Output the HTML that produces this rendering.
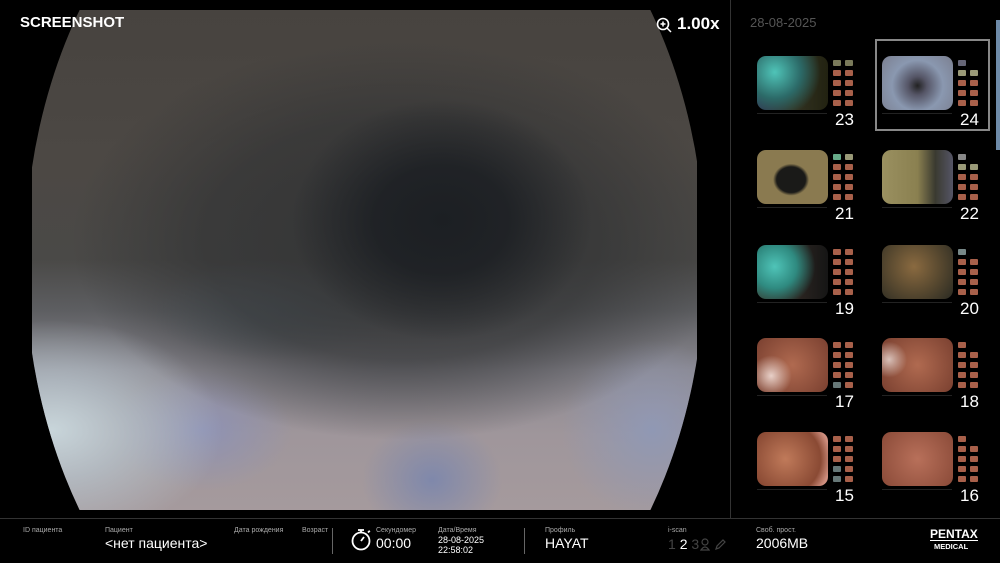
<!DOCTYPE html>
<html><head><meta charset="utf-8"><style>
*{margin:0;padding:0;box-sizing:border-box}
html,body{width:1000px;height:563px;overflow:hidden}
body{background:#000;position:relative;font-family:"Liberation Sans","DejaVu Sans",sans-serif;color:#fff}
.abs{position:absolute}
#clip{left:32px;top:10px;width:665px;height:500px;clip-path:ellipse(340px 460px at 333px 250px);
background:
radial-gradient(ellipse 150px 120px at 410px 210px,#1c1f23 0%,rgba(28,31,35,.85) 45%,rgba(28,31,35,0) 100%),
radial-gradient(ellipse 330px 200px at 370px 230px,#333435 0%,rgba(51,52,53,.7) 60%,rgba(51,52,53,0) 100%),
radial-gradient(ellipse 170px 110px at 20px 420px,#c8d5da 0%,rgba(185,198,206,.7) 45%,rgba(185,198,206,0) 100%),
radial-gradient(ellipse 70px 60px at 400px 470px,#7f88ab 0%,rgba(127,136,171,0) 100%),
radial-gradient(ellipse 90px 60px at 170px 420px,#8e92b4 0%,rgba(142,146,180,0) 100%),
radial-gradient(ellipse 90px 90px at 620px 420px,#9098b4 0%,rgba(144,152,180,0) 100%),
radial-gradient(ellipse 120px 50px at 240px 300px,#59656e 0%,rgba(89,101,110,0) 100%),
linear-gradient(180deg,#47433f 0%,#4c4844 30%,#4a4947 50%,#5d5e61 60%,#8a8890 72%,#9f969b 85%,#a59a9d 100%)}
#div{left:730px;top:0;width:1px;height:518px;background:#333}
#hl{left:0;top:518px;width:1000px;height:1px;background:#333}
.th{position:absolute;width:106px;height:75px}
.th .im{position:absolute;left:2px;top:4px;width:71px;height:54px;border-radius:9px}
.th .ic{position:absolute;left:78px;top:8px;width:25px;height:50px}
.th .ic i{position:absolute;width:8px;height:6px;background:#a8604a;border-radius:1px}
.th .n{position:absolute;left:80px;top:58px;font-size:17px;color:#fff}
.th .bar{position:absolute;left:2px;top:61px;width:70px;height:1px;background:#222}
.lb{position:absolute;font-size:7px;color:#aaa}
.v{position:absolute;font-size:14px;color:#fff}
</style></head><body>
<div id="clip" class="abs"></div>
<div class="abs" style="left:20px;top:14px;font-size:15px;font-weight:bold">SCREENSHOT</div>
<svg class="abs" style="left:656px;top:17px" width="16" height="16" viewBox="0 0 16 16"><circle cx="7" cy="7" r="5.5" fill="none" stroke="#fff" stroke-width="1.6"/><path d="M11 11l4 4M7 4.5v5M4.5 7h5" stroke="#fff" stroke-width="1.5"/></svg>
<div class="abs" style="left:677px;top:14px;font-size:17px;font-weight:bold">1.00x</div>
<div id="div" class="abs"></div>
<div class="abs" style="left:750px;top:15px;font-size:13px;color:#555">28-08-2025</div>
<div class="abs" style="left:996px;top:20px;width:4px;height:130px;background:#6d8aa8"></div>
<div class="abs" style="left:875px;top:39px;width:115px;height:92px;border:2px solid #888"></div>

<div class="th" style="left:755px;top:52px"><div class="im" style="background:radial-gradient(circle at 25% 30%,#4fc4b8,#2c6a68 40%,transparent 70%),linear-gradient(90deg,#335,#332 50%,#221);"></div><div class="ic"><i style="left:0;top:0;background:#7a7a5a"></i><i style="left:12px;top:0;background:#7a7a5a"></i><i style="left:0;top:10px"></i><i style="left:12px;top:10px"></i><i style="left:0;top:20px"></i><i style="left:12px;top:20px"></i><i style="left:0;top:30px"></i><i style="left:12px;top:30px"></i><i style="left:0;top:40px"></i><i style="left:12px;top:40px"></i></div><div class="bar"></div><div class="n">23</div></div>
<div class="th" style="left:880px;top:52px"><div class="im" style="background:radial-gradient(circle at 50% 55%,#222 0,#556 20%,#8a98b0 55%,#7b7f90 100%)"></div><div class="ic"><i style="left:0;top:0;background:#667"></i><i style="left:0;top:10px;background:#997"></i><i style="left:12px;top:10px;background:#997"></i><i style="left:0;top:20px"></i><i style="left:12px;top:20px"></i><i style="left:0;top:30px"></i><i style="left:12px;top:30px"></i><i style="left:0;top:40px"></i><i style="left:12px;top:40px"></i></div><div class="bar"></div><div class="n">24</div></div>

<div class="th" style="left:755px;top:146px"><div class="im" style="background:radial-gradient(ellipse 18px 16px at 48% 55%,#1a1a18 80%,#8a7a50 100%),radial-gradient(circle,#a08c5c,#5a5a40)"></div><div class="ic"><i style="left:0;top:0;background:#6a8"></i><i style="left:12px;top:0;background:#997"></i><i style="left:0;top:10px"></i><i style="left:12px;top:10px"></i><i style="left:0;top:20px"></i><i style="left:12px;top:20px"></i><i style="left:0;top:30px"></i><i style="left:12px;top:30px"></i><i style="left:0;top:40px"></i><i style="left:12px;top:40px"></i></div><div class="bar"></div><div class="n">21</div></div>
<div class="th" style="left:880px;top:146px"><div class="im" style="background:linear-gradient(90deg,#9a9060,#8a8050 50%,#3a3a30 75%,#556 100%)"></div><div class="ic"><i style="left:0;top:0;background:#888"></i><i style="left:0;top:10px;background:#997"></i><i style="left:12px;top:10px;background:#997"></i><i style="left:0;top:20px"></i><i style="left:12px;top:20px"></i><i style="left:0;top:30px"></i><i style="left:12px;top:30px"></i><i style="left:0;top:40px"></i><i style="left:12px;top:40px"></i></div><div class="bar"></div><div class="n">22</div></div>

<div class="th" style="left:755px;top:241px"><div class="im" style="background:radial-gradient(circle at 25% 40%,#4fc4b8,#2f8a80 35%,transparent 65%),linear-gradient(90deg,#3a3a30,#2a2420 60%,#151515)"></div><div class="ic"><i style="left:0;top:0"></i><i style="left:12px;top:0"></i><i style="left:0;top:10px"></i><i style="left:12px;top:10px"></i><i style="left:0;top:20px"></i><i style="left:12px;top:20px"></i><i style="left:0;top:30px"></i><i style="left:12px;top:30px"></i><i style="left:0;top:40px"></i><i style="left:12px;top:40px"></i></div><div class="bar"></div><div class="n">19</div></div>
<div class="th" style="left:880px;top:241px"><div class="im" style="background:radial-gradient(circle at 45% 40%,#8a6a40,#5a4a30 50%,#2a2a22)"></div><div class="ic"><i style="left:0;top:0;background:#788"></i><i style="left:0;top:10px"></i><i style="left:12px;top:10px"></i><i style="left:0;top:20px"></i><i style="left:12px;top:20px"></i><i style="left:0;top:30px"></i><i style="left:12px;top:30px"></i><i style="left:0;top:40px"></i><i style="left:12px;top:40px"></i></div><div class="bar"></div><div class="n">20</div></div>

<div class="th" style="left:755px;top:334px"><div class="im" style="background:radial-gradient(circle at 20% 70%,#e8d0c8,transparent 30%),radial-gradient(circle,#b06a50,#7a4030)"></div><div class="ic"><i style="left:0;top:0"></i><i style="left:12px;top:0"></i><i style="left:0;top:10px"></i><i style="left:12px;top:10px"></i><i style="left:0;top:20px"></i><i style="left:12px;top:20px"></i><i style="left:0;top:30px"></i><i style="left:12px;top:30px"></i><i style="left:0;top:40px;background:#677"></i><i style="left:12px;top:40px"></i></div><div class="bar"></div><div class="n">17</div></div>
<div class="th" style="left:880px;top:334px"><div class="im" style="background:radial-gradient(circle at 10% 40%,#d8c0b8,transparent 25%),radial-gradient(circle,#b06a50,#7a4030)"></div><div class="ic"><i style="left:0;top:0"></i><i style="left:0;top:10px"></i><i style="left:12px;top:10px"></i><i style="left:0;top:20px"></i><i style="left:12px;top:20px"></i><i style="left:0;top:30px"></i><i style="left:12px;top:30px"></i><i style="left:0;top:40px"></i><i style="left:12px;top:40px"></i></div><div class="bar"></div><div class="n">18</div></div>

<div class="th" style="left:755px;top:428px"><div class="im" style="background:radial-gradient(circle at 40% 50%,#c07a5a,#8a4a34 70%,#d09080 90%)"></div><div class="ic"><i style="left:0;top:0"></i><i style="left:12px;top:0"></i><i style="left:0;top:10px"></i><i style="left:12px;top:10px"></i><i style="left:0;top:20px"></i><i style="left:12px;top:20px"></i><i style="left:0;top:30px;background:#677"></i><i style="left:12px;top:30px"></i><i style="left:0;top:40px;background:#677"></i><i style="left:12px;top:40px"></i></div><div class="bar"></div><div class="n">15</div></div>
<div class="th" style="left:880px;top:428px"><div class="im" style="background:radial-gradient(circle,#b8705a,#8a4a38)"></div><div class="ic"><i style="left:0;top:0"></i><i style="left:0;top:10px"></i><i style="left:12px;top:10px"></i><i style="left:0;top:20px"></i><i style="left:12px;top:20px"></i><i style="left:0;top:30px"></i><i style="left:12px;top:30px"></i><i style="left:0;top:40px"></i><i style="left:12px;top:40px"></i></div><div class="bar"></div><div class="n">16</div></div>

<div id="hl" class="abs"></div>
<div class="lb" style="left:23px;top:527px">ID пациента</div>
<div class="lb" style="left:105px;top:527px">Пациент</div>
<div class="v" style="left:105px;top:535px">&lt;нет пациента&gt;</div>
<div class="lb" style="left:234px;top:527px">Дата рождения</div>
<div class="lb" style="left:302px;top:527px">Возраст</div>
<div class="abs" style="left:332px;top:528px;width:1px;height:26px;background:#666"></div>
<svg class="abs" style="left:351px;top:528px" width="22" height="24" viewBox="0 0 22 24"><circle cx="10" cy="13" r="8.5" fill="none" stroke="#fff" stroke-width="1.8"/><path d="M7 2h6M10 2v2.5M17 4.5l1.8-1.8M10 13l3-4" stroke="#fff" stroke-width="1.8" fill="none"/></svg>
<div class="lb" style="left:376px;top:527px">Секундомер</div>
<div class="v" style="left:376px;top:535px">00:00</div>
<div class="lb" style="left:438px;top:527px">Дата/Время</div>
<div class="abs" style="left:438px;top:535px;font-size:9px;line-height:10px">28-08-2025<br>22:58:02</div>
<div class="abs" style="left:524px;top:528px;width:1px;height:26px;background:#666"></div>
<div class="lb" style="left:545px;top:527px">Профиль</div>
<div class="v" style="left:545px;top:535px">HAYAT</div>
<div class="lb" style="left:668px;top:527px">i-scan</div>
<div class="abs" style="left:668px;top:536px;font-size:14px;color:#444">1 <span style="color:#fff">2</span> 3</div>
<svg class="abs" style="left:700px;top:538px" width="28" height="13" viewBox="0 0 28 13"><circle cx="5" cy="4" r="3" fill="none" stroke="#444" stroke-width="1.2"/><path d="M1 12q4-6 8 0z" fill="none" stroke="#444" stroke-width="1.2"/><path d="M16 11l1-3 6-6 2 2-6 6z" fill="none" stroke="#444" stroke-width="1.2"/></svg>
<div class="lb" style="left:756px;top:527px">Своб. прост.</div>
<div class="v" style="left:756px;top:535px">2006MB</div>
<div class="abs" style="left:930px;top:529px;font-size:12px;font-weight:bold;line-height:11px;border-bottom:1px solid #fff">PENTAX</div>
<div class="abs" style="left:934px;top:542px;font-size:7.5px;font-weight:bold">MEDICAL</div>
</body></html>
